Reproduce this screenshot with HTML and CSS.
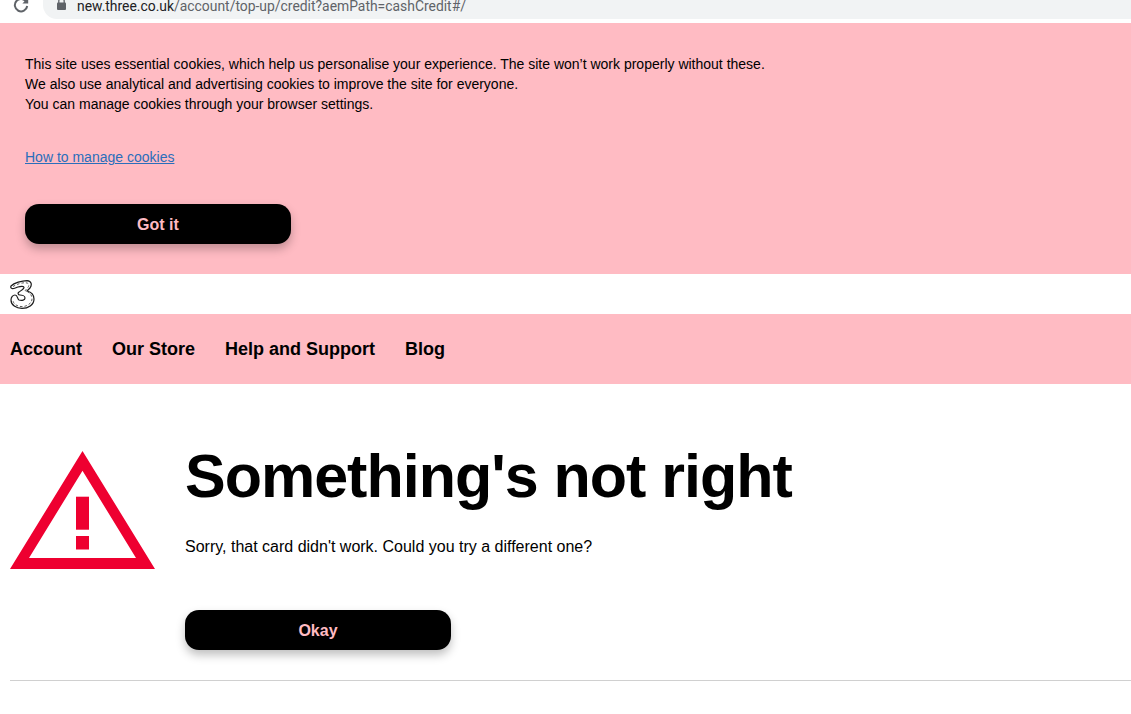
FILE: index.html
```html
<!DOCTYPE html>
<html lang="en">
<head>
  <meta charset="UTF-8">
  <title>Something's not right</title>
  <link rel="stylesheet" href="styles.css">
</head>
<body>
  <div class="chrome">
    <svg class="reload" width="16" height="16" viewBox="0 0 16 16">
      <path d="M13.6 5.4A6.2 6.2 0 1 0 14.2 9" fill="none" stroke="#5f6368" stroke-width="2"/>
      <path d="M9.4 6.4h5.800V0.600z" fill="#5f6368"/>
    </svg>
    <div class="address">
      <svg class="lock" width="9" height="12" viewBox="0 0 9 12">
        <path d="M1.800 5V3.200a2.700 2.700 0 0 1 5.400 0V5" fill="none" stroke="#5f6368" stroke-width="1.300"/>
        <rect x="0" y="4.500" width="9" height="7.500" rx="1" fill="#5f6368"/>
      </svg>
      <span class="url"><span class="host">new.three.co.uk</span>/account/top-up/credit?aemPath=cashCredit#/</span>
    </div>
  </div>

  <section class="cookies">
    <p class="cookies-text">
      This site uses essential cookies, which help us personalise your experience. The site won’t work properly without these.<br>
      We also use analytical and advertising cookies to improve the site for everyone.<br>
      You can manage cookies through your browser settings.
    </p>
    <a class="cookies-link" href="#">How to manage cookies</a>
    <button class="btn">Got it</button>
  </section>

  <header class="logo-bar">
    <svg class="logo" width="25" height="29" viewBox="0 0 25 29">
      <path d="M1 6C4 3 12 .6 17 .6c5 .4 5 4.400 3 7.400l-3 3c4 1 7 4 7 8 0 6-6 9.400-12 9.400-6 0-11-3.400-11-8.400 0-3 2-5 4-5 3 0 2 4 4 5 3 1 6 0 6-2 0-2-3-3-5-3-2 0-2.500-2-1-3 2-1.500 5-3 5-4.500 0-1.500-3-1.500-6-.5-3 1-5 2-6 1.500C.800 8 .500 7 1 6z" fill="#fff" stroke="#1a1a1a" stroke-width="1.200"/>
      <path d="M3 6.500C7 4 12 2.500 16 2.800c3 .2 3.500 2.500 2 4.500l-3 3.500c4 1 7 3.500 7 8 0 4.500-5 7.800-10 7.800-5 0-9-2.800-9-6.500" fill="none" stroke="#444" stroke-width=".9" stroke-dasharray="2.500 2"/>
    </svg>
  </header>

  <nav class="nav">
    <a href="#">Account</a>
    <a href="#">Our Store</a>
    <a href="#">Help and Support</a>
    <a href="#">Blog</a>
  </nav>

  <main class="message">
    <svg class="warning" width="145" height="118" viewBox="0 0 145 118">
      <path fill-rule="evenodd" d="M72.500 0L145 118H0zM72.500 19.700L19 107H126z" fill="#ee0030"/>
      <rect x="66" y="45.700" width="13" height="33" fill="#ee0030"/>
      <rect x="66" y="85" width="13" height="13.500" fill="#ee0030"/>
    </svg>
    <div class="message-body">
      <h1>Something's not right</h1>
      <p>Sorry, that card didn't work. Could you try a different one?</p>
      <button class="btn">Okay</button>
    </div>
  </main>
  <hr class="rule">
</body>
</html>
```

FILE: styles.css
```css
body {
  margin: 0;
  height: 714px;
  overflow: hidden;
  background: #fff;
  color: #000;
  font-family: "Liberation Sans", Arial, sans-serif;
}

.chrome {
  display: flex;
  align-items: flex-start;
  height: 23px;
  padding-left: 13px;
  box-sizing: border-box;
}

.reload {
  margin-top: -3px;
  flex: none;
}

.address {
  display: flex;
  align-items: flex-start;
  flex: 1;
  height: 19px;
  margin-left: 14px;
  padding-left: 14px;
  background: #f1f3f4;
  border-bottom-left-radius: 14px;
}

.lock {
  margin-top: -2px;
  flex: none;
}

.url {
  margin-left: 11px;
  margin-top: -2px;
  font-family: "Roboto", sans-serif;
  font-size: 13.900px;
  line-height: 16px;
  color: #5f6368;
  white-space: nowrap;
}

.host {
  color: #202124;
}

.cookies {
  display: flex;
  flex-direction: column;
  align-items: flex-start;
  height: 251px;
  padding: 31px 25px 0;
  box-sizing: border-box;
  background: #ffbbc3;
  font-size: 14px;
}

.cookies-text {
  margin: 0;
  line-height: 20px;
}

.cookies-link {
  margin-top: 33px;
  line-height: 20px;
  color: #2a6ebb;
}

.btn {
  display: block;
  width: 266px;
  height: 40px;
  padding: 2px 0 0;
  border: 0;
  border-radius: 14px;
  background: #000;
  color: #ffbbc3;
  font-family: inherit;
  font-size: 16px;
  font-weight: bold;
  box-shadow: 0 5px 10px rgba(0, 0, 0, 0.25);
}

.cookies .btn {
  margin-top: 37px;
}

.logo-bar {
  display: flex;
  align-items: center;
  height: 40px;
  padding-left: 10px;
  box-sizing: border-box;
}

.nav {
  display: flex;
  align-items: center;
  gap: 30px;
  height: 70px;
  padding-left: 10px;
  background: #ffbbc3;
}

.nav a {
  color: #000;
  font-size: 18px;
  font-weight: bold;
  text-decoration: none;
}

.message {
  display: flex;
  gap: 30px;
  padding: 67px 0 0 10px;
}

.warning {
  flex: none;
}

.message-body h1 {
  margin: -12px 0 0;
  font-size: 61px;
  letter-spacing: -1px;
  line-height: 74px;
}

.message-body p {
  margin: 24px 0 0;
  font-size: 16px;
  line-height: 20px;
}

.message-body .btn {
  margin-top: 53px;
}

.rule {
  margin: 30px 0 0 10px;
  border: 0;
  border-top: 1px solid #d0d0d0;
}
```
